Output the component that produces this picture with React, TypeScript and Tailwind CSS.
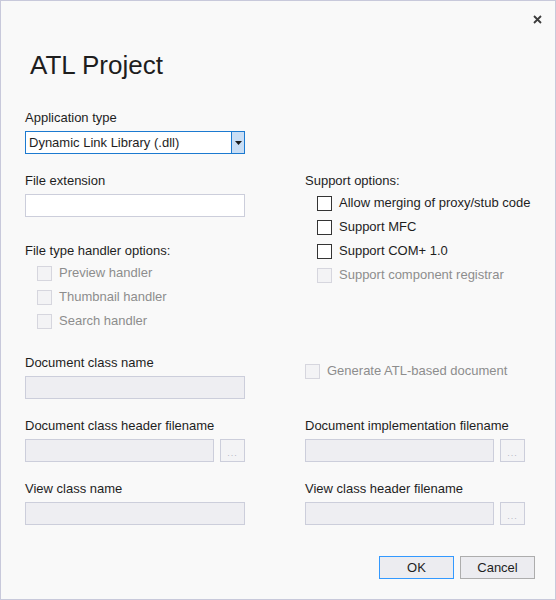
import { FC } from 'react';

const font = { fontFamily: '"Liberation Sans", Arial, sans-serif' };

const Label: FC<{ text: string; disabled?: boolean }> = ({ text, disabled }) => (
  <div className={`h-4 leading-4 text-[13px] mb-[5px] ${disabled ? 'text-[#8d8d8d]' : 'text-[#1e1e1e]'}`}>{text}</div>
);

const Check: FC<{ text: string; disabled?: boolean }> = ({ text, disabled }) => (
  <div className="h-6 flex items-center">
    <span
      className={`w-[15px] h-[15px] border ${
        disabled ? 'border-[#d6d6de] bg-[#f3f3f5]' : 'border-[#343434] bg-white'
      }`}
    />
    <span className={`ml-[7px] text-[13px] leading-4 ${disabled ? 'text-[#8d8d8d]' : 'text-[#1e1e1e]'}`}>{text}</span>
  </div>
);

const DisabledInput: FC<{ browse?: boolean }> = ({ browse }) => (
  <div className="flex gap-[6px]">
    <div className={`h-[23px] border border-[#cccedb] bg-[#eeeef2] ${browse ? 'w-[189px]' : 'w-[220px]'}`} />
    {browse && (
      <div className="w-[25px] h-[23px] border border-[#cccedb] bg-[#f3f3f5] flex items-end justify-center pb-[4px]">
        <span className="text-[9px] leading-[8px] tracking-[1px] text-[#b5b5c4]">...</span>
      </div>
    )}
  </div>
);

const App: FC = () => {
  return (
    <div style={font} className="w-[556px] h-[600px] bg-[#f9f9f9] border border-[#c8c9db] relative text-[#1e1e1e]">
      <button className="absolute right-[13px] top-[13px] w-[10px] h-[10px] flex items-center justify-center">
        <svg width="9" height="9" viewBox="0 0 9 9">
          <path d="M1 1 L8 8 M8 1 L1 8" stroke="#3c3c3c" strokeWidth="1.8" />
        </svg>
      </button>

      <div className="pl-[24px] pt-[49px]">
        <h1 className="ml-[5px] text-[26px] leading-[30px] text-[#1e1e1e]">ATL Project</h1>

        <div className="mt-[30px]">
          <Label text="Application type" />
          <div className="w-[220px] h-[23px] border border-[#1c7ad0] bg-white flex">
            <div className="flex-1 px-[3px] text-[13px] leading-[21px]">Dynamic Link Library (.dll)</div>
            <div className="w-[13px] border-l border-[#1c7ad0] bg-[#c9def5] flex items-center justify-center">
              <svg width="7" height="4" viewBox="0 0 7 4">
                <path d="M0 0 H7 L3.5 4 Z" fill="#1e1e1e" />
              </svg>
            </div>
          </div>
        </div>

        <div className="grid grid-cols-[220px_230px] gap-x-[60px] mt-[19px]">
          <div>
            <Label text="File extension" />
            <div className="w-[220px] h-[23px] border border-[#cccedb] bg-white" />
            <div className="mt-[26px] h-4 leading-4 text-[13px]">File type handler options:</div>
            <div className="mt-[2px] pl-[12px]">
              <Check text="Preview handler" disabled />
              <Check text="Thumbnail handler" disabled />
              <Check text="Search handler" disabled />
            </div>
          </div>
          <div>
            <div className="h-4 leading-4 text-[13px]">Support options:</div>
            <div className="mt-[2px] pl-[12px]">
              <Check text="Allow merging of proxy/stub code" />
              <Check text="Support MFC" />
              <Check text="Support COM+ 1.0" />
              <Check text="Support component registrar" disabled />
            </div>
          </div>

          <div className="mt-[22px]">
            <Label text="Document class name" />
            <DisabledInput />
          </div>
          <div className="mt-[26px]">
            <Check text="Generate ATL-based document" disabled />
          </div>

          <div className="mt-[19px]">
            <Label text="Document class header filename" />
            <DisabledInput browse />
          </div>
          <div className="mt-[19px]">
            <Label text="Document implementation filename" />
            <DisabledInput browse />
          </div>

          <div className="mt-[19px]">
            <Label text="View class name" />
            <DisabledInput />
          </div>
          <div className="mt-[19px]">
            <Label text="View class header filename" />
            <DisabledInput browse />
          </div>
        </div>

        <div className="flex justify-end gap-[6px] pr-[20px] mt-[31px]">
          <button className="w-[75px] h-[23px] border border-[#3399ff] bg-[#ececf0] text-[13px] leading-[21px] text-[#1e1e1e]">
            OK
          </button>
          <button className="w-[75px] h-[23px] border border-[#adadad] bg-[#ececf0] text-[13px] leading-[21px] text-[#1e1e1e]">
            Cancel
          </button>
        </div>
      </div>
    </div>
  );
};

export default App;
